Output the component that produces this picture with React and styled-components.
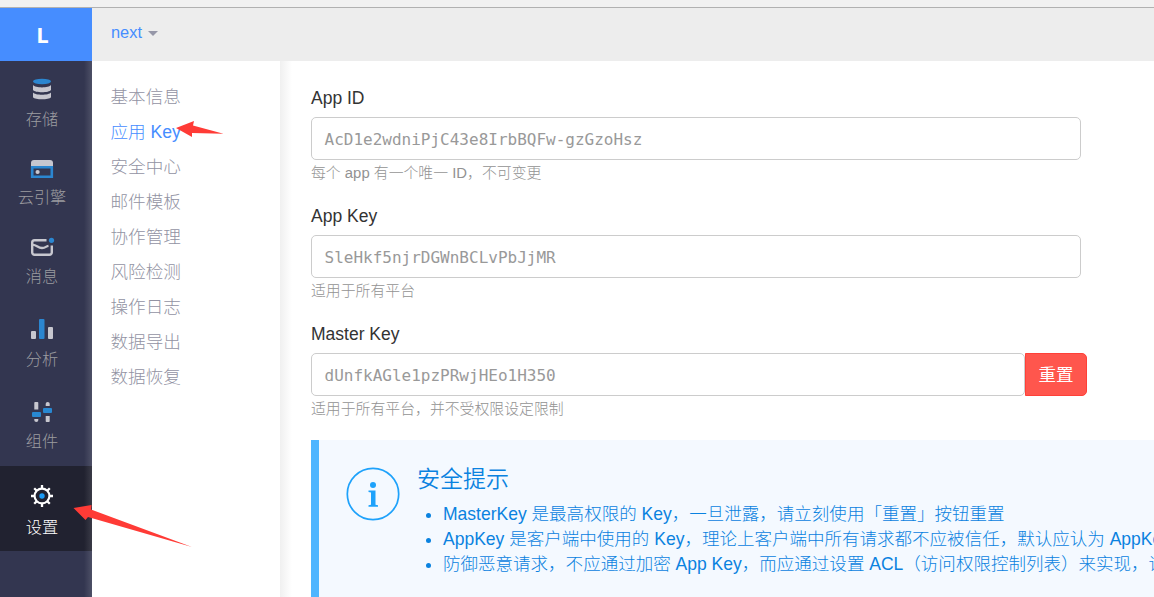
import React from "react";
import styled, { createGlobalStyle } from "styled-components";

const GlobalStyle = createGlobalStyle`
  * { box-sizing: border-box; }
  body {
    margin: 0;
    overflow: hidden;
    background: #fff;
    font-family: "Liberation Sans", "Noto Sans CJK SC", sans-serif;
    font-size: 17.5px;
    font-weight: 300;
  }
`;

const Page = styled.div`
  position: relative;
  display: flex;
  flex-direction: column;
  width: 1154px;
  height: 597px;
  overflow: hidden;
`;

const BrowserEdge = styled.div`
  flex: none;
  height: 8px;
  background: #f1f1f1;
  border-bottom: 1px solid #b1b1b1;
`;

const Shell = styled.div`
  flex: 1;
  display: flex;
  min-height: 0;
`;

const Sidebar = styled.nav`
  flex: none;
  width: 92px;
  background: #333650;
`;

const Logo = styled.div`
  height: 53px;
  display: flex;
  align-items: center;
  justify-content: center;
  padding: 0 7px 2px 0;
  background: #468dff;
  color: #fff;
  font: 700 22px/50px "Open Sans", sans-serif;
`;

const NavList = styled.div`
  height: 536px;
  background: linear-gradient(to left, rgba(255, 255, 255, 0.13), rgba(255, 255, 255, 0) 8px) #333650;
`;

const NavItem = styled.a`
  display: flex;
  flex-direction: column;
  align-items: center;
  height: ${(p) => p.$height}px;
  padding: ${(p) => p.$top}px 8px 0 0;
  gap: ${(p) => p.$gap}px;
  color: ${(p) => (p.$active ? "#fff" : "#9c9ca0")};
  background: ${(p) =>
    p.$active
      ? "linear-gradient(to left, rgba(255,255,255,.11), rgba(255,255,255,0) 8px) #212230"
      : "transparent"};
`;

const NavIcon = styled.svg`
  flex: none;
  width: 26px;
  height: 26px;
  display: block;
`;

const NavLabel = styled.span`
  font-size: 16.2px;
  line-height: 24px;
  white-space: nowrap;
`;

const Main = styled.div`
  flex: 1;
  min-width: 0;
  display: flex;
  flex-direction: column;
`;

const TopBar = styled.header`
  flex: none;
  height: 53px;
  display: flex;
  align-items: center;
  gap: 6px;
  padding: 0 19px 4px;
  background: #ededed;
  color: #468dff;
  font-size: 16.4px;
`;

const Caret = styled.span`
  margin-top: 2px;
  border: 5px solid transparent;
  border-top-color: #9697a8;
  border-bottom: 0;
`;

const Body = styled.div`
  flex: 1;
  display: flex;
  min-height: 0;
`;

const Menu = styled.nav`
  flex: none;
  width: 188px;
  padding: 19px 18.5px;
  font-size: 17.6px;
`;

const MenuLink = styled.a`
  display: block;
  height: 35px;
  line-height: 35px;
  white-space: nowrap;
  color: ${(p) => (p.$active ? "#468dff" : "#9293a3")};
`;

const Content = styled.main`
  flex: 1;
  min-width: 0;
  padding: 24px 0 0 31px;
  background: linear-gradient(to right, #f0f0f0, #fff 12px);
`;

const Field = styled.div`
  height: 118px;
`;

const FieldLabel = styled.label`
  display: block;
  height: 32px;
  line-height: 27px;
  color: #333;
`;

const InputRow = styled.div`
  display: flex;
  width: ${(p) => p.$width}px;
`;

const KeyBox = styled.div`
  flex: 1;
  height: 43px;
  padding: 1px 12.5px 0;
  border: 1px solid #ccc;
  border-radius: 5px;
  background: #fff;
  color: #999;
  font: 400 16px/41px "DejaVu Sans Mono", monospace;
`;

const ResetButton = styled.button`
  width: 62px;
  height: 43px;
  padding: 0;
  border: 1px solid #ff4038;
  border-radius: 0 5px 5px 0;
  background: #ff564d;
  color: #fff;
  font: 400 17.5px/38px "Liberation Sans", "Noto Sans CJK SC", sans-serif;
`;

const Hint = styled.p`
  margin: 1px 0 0;
  color: #929292;
  font-size: 14.87px;
  line-height: 25px;
`;

const Notice = styled.section`
  display: flex;
  gap: 18px;
  width: 900px;
  height: 180px;
  margin-top: 1px;
  padding: 26px 0 0 27px;
  border-left: 8px solid #4fb5ff;
  background: #f4f9ff;
  color: #0a82e0;
`;

const NoticeIcon = styled.svg`
  flex: none;
  width: 54px;
  height: 54px;
  margin-top: 1px;
`;

const NoticeTitle = styled.h2`
  margin: -1px 0 0 -1px;
  font-size: 23px;
  font-weight: 350;
  line-height: 28px;
`;

const NoticeList = styled.ul`
  margin: 9px 0 0;
  padding: 0 0 0 25px;
  font-size: 17.52px;
  line-height: 25px;
  white-space: nowrap;
`;

const Pointers = styled.svg`
  position: absolute;
  left: 0;
  top: 0;
  width: 240px;
  height: 597px;
  pointer-events: none;
`;

const GREY = "#c7c7cf";
const BLUE = "#2b86d0";

const icons = {
  storage: (
    <>
      <path d="M4 9C6 12.2 20 12.2 22 9V14C20 17 6 17 4 14Z" fill={GREY} />
      <path d="M4 16.600C6 19.600 20 19.600 22 16.600V21.200C20 23.900 6 23.900 4 21.200Z" fill={GREY} />
      <ellipse cx="13" cy="5.5" rx="9" ry="2.7" fill={BLUE} />
    </>
  ),
  engine: (
    <>
      <path d="M2 10V7a3 3 0 0 1 3-3h16a3 3 0 0 1 3 3v3Z" fill={GREY} />
      <path d="M3.200 11.200h19.600V20.800H3.200Z" fill="none" stroke={BLUE} strokeWidth="2.6" />
      <circle cx="8.6" cy="16" r="2.1" fill={GREY} />
    </>
  ),
  message: (
    <>
      <path
        d="M17.500 5.200H5.500A2.300 2.300 0 0 0 3.200 7.500V17.500A2.300 2.300 0 0 0 5.500 19.800H20.500A2.300 2.300 0 0 0 22.800 17.500V10.500"
        fill="none"
        stroke={GREY}
        strokeWidth="2.4"
      />
      <path d="M4 9.800C7 9.500 9 13 13 13S16.500 11.300 19.500 10.800" fill="none" stroke={GREY} strokeWidth="2.300" />
      <circle cx="22.500" cy="5.300" r="2.600" fill={BLUE} />
    </>
  ),
  analysis: (
    <>
      <rect x="2" y="15" width="5" height="8" rx="1" fill={GREY} />
      <rect x="10" y="3" width="5.5" height="20" rx="1" fill={BLUE} />
      <rect x="19" y="11" width="5" height="12" rx="1" fill={GREY} />
    </>
  ),
  component: (
    <>
      <path d="M5.300 3.800a.8.8 0 0 1 .8-.8H8.500a.8.8 0 0 1 .8.8V10.500H5.300ZM5.300 20H9.300V21.200Q9.300 23 7.300 23T5.300 21.200Z" fill={GREY} />
      <path d="M16.700 7V4.800Q16.700 3 18.700 3T20.700 4.800V7ZM16.700 17H20.700V22.200a.8.8 0 0 1-.8.8H17.500a.8.8 0 0 1-.8-.8Z" fill={GREY} />
      <rect x="3" y="13" width="9" height="5" rx="1" fill="#2888d2" />
      <rect x="14" y="9" width="9" height="5" rx="1" fill="#2888d2" />
    </>
  ),
  settings: (
    <>
      <circle cx="13" cy="13" r="7.4" fill="none" stroke="#fff" strokeWidth="2.1" />
      <path
        d="M13 2V6M13 20V24M2 13H6M20 13H24M5.2 5.2L8 8M18 18L20.8 20.8M5.2 20.8L8 18M18 8L20.8 5.2"
        stroke="#fff"
        strokeWidth="2.3"
      />
      <circle cx="13" cy="13" r="2.7" fill="#1c9bf5" />
    </>
  ),
};

const navItems = [
  { icon: "storage", label: "存储", height: 80, top: 15, gap: 5 },
  { icon: "engine", label: "云引擎", height: 79, top: 15, gap: 3 },
  { icon: "message", label: "消息", height: 79, top: 15, gap: 3 },
  { icon: "analysis", label: "分析", height: 84, top: 17, gap: 5 },
  { icon: "component", label: "组件", height: 83, top: 16, gap: 4 },
  { icon: "settings", label: "设置", height: 85, top: 17, gap: 6, active: true },
];

const menuItems = [
  "基本信息",
  "应用 Key",
  "安全中心",
  "邮件模板",
  "协作管理",
  "风险检测",
  "操作日志",
  "数据导出",
  "数据恢复",
];

const fields = [
  { label: "App ID", value: "AcD1e2wdniPjC43e8IrbBQFw-gzGzoHsz", hint: "每个 app 有一个唯一 ID，不可变更" },
  { label: "App Key", value: "SleHkf5njrDGWnBCLvPbJjMR", hint: "适用于所有平台" },
  {
    label: "Master Key",
    value: "dUnfkAGle1pzPRwjHEo1H350",
    hint: "适用于所有平台，并不受权限设定限制",
    resettable: true,
  },
];

export default function App() {
  return (
    <Page>
      <GlobalStyle />
      <BrowserEdge />
      <Shell>
        <Sidebar>
          <Logo>L</Logo>
          <NavList>
            {navItems.map((item) => (
              <NavItem key={item.icon} $height={item.height} $top={item.top} $gap={item.gap} $active={item.active}>
                <NavIcon viewBox="0 0 26 26">{icons[item.icon]}</NavIcon>
                <NavLabel>{item.label}</NavLabel>
              </NavItem>
            ))}
          </NavList>
        </Sidebar>
        <Main>
          <TopBar>
            next
            <Caret />
          </TopBar>
          <Body>
            <Menu>
              {menuItems.map((label) => (
                <MenuLink key={label} $active={label === "应用 Key"}>
                  {label}
                </MenuLink>
              ))}
            </Menu>
            <Content>
              {fields.map((field) => (
                <Field key={field.label}>
                  <FieldLabel>{field.label}</FieldLabel>
                  <InputRow $width={field.resettable ? 776 : 770}>
                    <KeyBox>{field.value}</KeyBox>
                    {field.resettable && <ResetButton>重置</ResetButton>}
                  </InputRow>
                  <Hint>{field.hint}</Hint>
                </Field>
              ))}
              <Notice>
                <NoticeIcon viewBox="0 0 54 54">
                  <circle cx="27" cy="27" r="25.7" fill="none" stroke="#1ea2fb" strokeWidth="1.7" />
                  <circle cx="27" cy="18" r="3" fill="#1ea2fb" />
                  <path d="M22.500 23.600H29.500V37.700L32 38.300V39.700H22.500V38.300L25 37.700V25.600L22.500 25Z" fill="#1ea2fb" />
                </NoticeIcon>
                <div>
                  <NoticeTitle>安全提示</NoticeTitle>
                  <NoticeList>
                    <li>MasterKey 是最高权限的 Key，一旦泄露，请立刻使用「重置」按钮重置</li>
                    <li>AppKey 是客户端中使用的 Key，理论上客户端中所有请求都不应被信任，默认应认为 AppKey</li>
                    <li>防御恶意请求，不应通过加密 App Key，而应通过设置 ACL（访问权限控制列表）来实现，请</li>
                  </NoticeList>
                </div>
              </Notice>
            </Content>
          </Body>
        </Main>
      </Shell>
      <Pointers viewBox="0 0 240 597">
        <path d="M176 128L194 121L193 125.5L223.500 133.800L192 133L192 137Z" fill="#ff3b36" />
        <path d="M73.500 508L91.500 505L91 509.500L192 547L88 517L85.500 520Z" fill="#ff3b36" />
      </Pointers>
    </Page>
  );
}
